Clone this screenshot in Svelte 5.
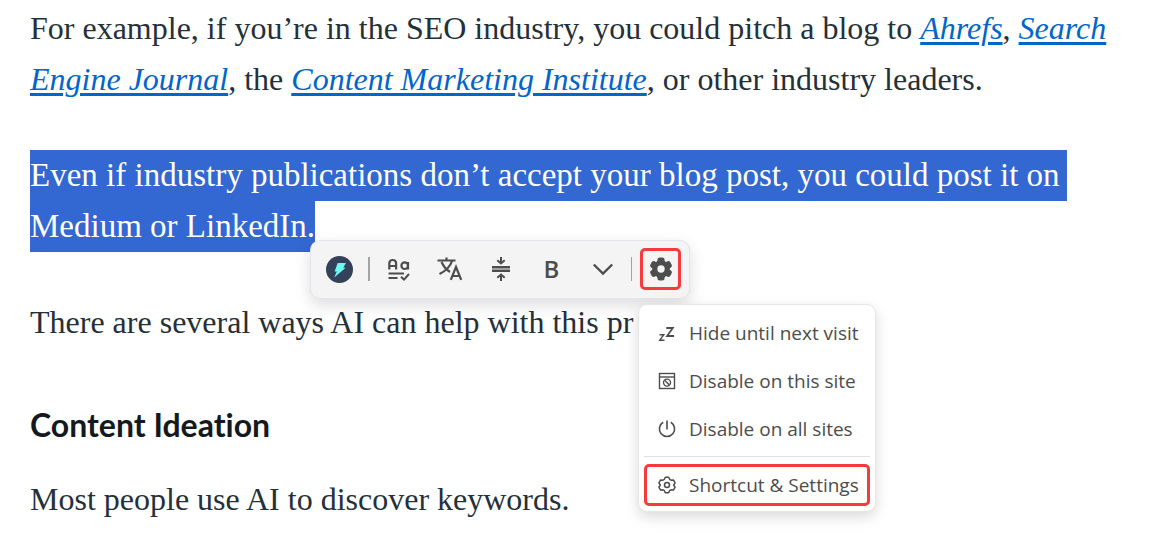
<script>
  const menu = [
    { id: 'hide', label: 'Hide until next visit' },
    { id: 'site', label: 'Disable on this site' },
    { id: 'all', label: 'Disable on all sites' }
  ];
</script>

<main>
  <p>
    For example, if you’re in the SEO industry, you could pitch a blog to <a href="#ahrefs">Ahrefs</a>, <a href="#sej">Search<br />
    Engine Journal</a>, the <a href="#cmi">Content Marketing Institute</a>, or other industry leaders.
  </p>
  <p class="selected">
    <span class="full">Even if industry publications don’t accept your blog post, you could post it on</span>
    <span>Medium or LinkedIn.</span>
  </p>
  <p>There are several ways AI can help with this pr</p>
  <h3>Content Ideation</h3>
  <p>Most people use AI to discover keywords.</p>

  <div class="toolbar" role="toolbar" aria-label="Text actions">
    <button class="logo" aria-label="Assistant">
      <svg width="27" height="27" viewBox="0 0 27 27">
        <circle cx="13.5" cy="13.5" r="13.5" fill="#33415a" />
        <path d="M11.7 7h8.2l-2.6 4.7h2.4L8.2 21.6l2.6-6.2H8.6z" fill="#6ff8f2" />
      </svg>
    </button>
    <span class="rule thick"></span>
    <div class="tools">
      <button aria-label="Proofread">
        <svg width="24" height="24" viewBox="0 0 24 24" fill="none" stroke="currentColor" stroke-width="2.200">
          <path d="M2.300 12.500V6.500Q2.300 3 5.700 3T9.100 6.500V12.500M2.300 9h6.800M21 5v7.500M21 8.700a3.300 3.300 0 1 1-6.600 0a3.300 3.300 0 1 1 6.600 0z" />
          <path d="M1.500 16.500h15.500M1.500 21h9M14 19.800l3 2.800L22 17" stroke-width="2" />
        </svg>
      </button>
      <button aria-label="Translate">
        <svg width="26" height="26" viewBox="0 0 26 26" fill="none" stroke="currentColor" stroke-width="2.200">
          <path d="M0.500 4.500h18M9.500 1.500v3M4.500 6Q7.500 12.500 13 16M15 5Q12.500 13 2.500 18M13.800 23.800L19 11L24.200 23.800M15.500 20h7" />
        </svg>
      </button>
      <button aria-label="Shorten">
        <svg width="20" height="24" viewBox="0 0 20 24" fill="none" stroke="currentColor" stroke-width="2">
          <path d="M1 10h18M1 14h18M10 0v6M6.300 3.200L10 6.500l3.700-3.300M10 24v-6M6.300 20.800L10 17.500l3.700 3.300" />
          <path d="M1 12h18" opacity=".5" />
        </svg>
      </button>
      <button class="bold" aria-label="Bold">B</button>
      <button aria-label="More actions">
        <svg width="22" height="14" viewBox="0 0 22 14" fill="none" stroke="currentColor" stroke-width="2.400">
          <path d="M1.800 2.500L11 11.500L20.200 2.500" />
        </svg>
      </button>
    </div>
    <span class="rule"></span>
    <button class="gear marked" aria-label="Settings">
      <svg width="24" height="24" viewBox="0 0 24 24">
        <g fill="currentColor">
          <circle cx="12" cy="12" r="8.800" />
          {#each [0, 60, 120, 180, 240, 300] as angle}
            <rect x="8.400" y="0.600" width="7.200" height="8" rx="2.500" transform="rotate({angle} 12 12)" />
          {/each}
        </g>
        <circle cx="12" cy="12" r="3.700" fill="#f4f4f4" />
      </svg>
    </button>
  </div>

  <div class="menu" role="menu">
    {#each menu as item}
      <button role="menuitem">
        <svg width="18" height="18" viewBox="0 0 18 18" fill="none" stroke="currentColor" stroke-width="1.400">
          {#if item.id === 'hide'}
            <path d="M1.500 10.700h4.300L1.700 16.300h4.800" />
            <path d="M8.300 4h6.500l-5.700 8h7" stroke-width="1.800" />
          {:else if item.id === 'site'}
            <rect x="1.500" y="1.500" width="15" height="15" />
            <path d="M1 5h16" />
            <circle cx="9" cy="10.600" r="3.500" />
            <path d="M6.700 8.300l4.700 4.700" />
          {:else}
            <path d="M9 0.500v9M5.200 2.300A7.600 7.600 0 1 0 12.800 2.300" stroke-width="1.600" />
          {/if}
        </svg>
        {item.label}
      </button>
    {/each}
    <hr />
    <button class="marked" role="menuitem">
      <svg width="18" height="18" viewBox="0 0 18 18" fill="none" stroke="currentColor" stroke-width="1.500">
        <path d="M7.300 1.200h3.400l.9 2.100 1.500.9 2.300-.3 1.700 2.900L15.700 9l1.400 2.200-1.700 2.900-2.300-.3-1.500.9-.9 2.100H7.300l-.9-2.100-1.500-.9-2.300.3L.9 11.200 2.300 9 .9 6.800l1.700-2.900 2.300.3 1.500-.9z" stroke-linejoin="round" />
        <circle cx="9" cy="9" r="2.500" />
      </svg>
      Shortcut &amp; Settings
    </button>
  </div>
</main>

<style>
  :global(body) {
    margin: 0;
    background: #fff;
  }

  main {
    position: relative;
    padding: 3px 30px 9px;
    color: #24303a;
    font: 32px/51px "Liberation Serif", serif;
  }

  p {
    margin: 0 0 45px;
    white-space: nowrap;
  }

  p:last-of-type {
    margin-bottom: 0;
  }

  a {
    color: #0066cc;
    font-style: italic;
    text-decoration-thickness: 3px;
    text-underline-offset: 3px;
  }

  h3 {
    margin: 0 0 17px;
    color: #14191d;
    font: 700 32px/64px Lato, sans-serif;
    font-variant-ligatures: none;
  }

  .selected {
    font-size: 33px;
  }

  .selected span {
    display: block;
    width: fit-content;
    background: #3367d1;
    color: #fff;
  }

  .selected .full {
    padding-right: 7px;
  }

  button {
    display: flex;
    align-items: center;
    justify-content: center;
    box-sizing: border-box;
    margin: 0;
    padding: 0;
    border: 0;
    background: none;
    color: #4d4d4d;
    font: 20px/26px "Open Sans", sans-serif;
  }

  svg {
    display: block;
    flex: none;
  }

  .toolbar {
    position: absolute;
    top: 240px;
    left: 310px;
    display: flex;
    align-items: center;
    padding: 7px 8px 8px 15px;
    border: 1px solid #e4e5ea;
    border-radius: 10px;
    background: #f4f4f4;
    box-shadow: 0 6px 16px rgb(0 0 0 / 14%);
  }

  .rule {
    width: 1px;
    height: 24px;
    background: #a3a3a3;
  }

  .rule.thick {
    width: 2px;
    margin-left: 15px;
  }

  .tools {
    display: flex;
    margin: 0 3px;
  }

  .tools button {
    width: 51px;
    height: 42px;
  }

  .tools .bold {
    font-size: 24px;
    font-weight: 600;
  }

  .marked {
    border: 3px solid #f53b3b;
    border-radius: 5px;
  }

  .gear {
    width: 41px;
    height: 42px;
    margin-left: 8px;
  }

  .menu {
    position: absolute;
    top: 304px;
    left: 638px;
    padding: 7px 5px 5px;
    border: 1px solid #e6e6e6;
    border-radius: 9px;
    background: #fff;
    box-shadow: 0 5px 14px rgb(0 0 0 / 15%);
  }

  .menu button {
    justify-content: flex-start;
    gap: 13px;
    width: 226px;
    height: 42px;
    margin-bottom: 6px;
    padding: 0 14px;
    font-size: 19px;
    white-space: nowrap;
  }

  .menu .marked {
    margin: 0;
    padding: 0 11px;
  }

  hr {
    height: 1px;
    margin: 0 0 7px;
    border: 0;
    background: #e0e0e0;
  }
</style>
